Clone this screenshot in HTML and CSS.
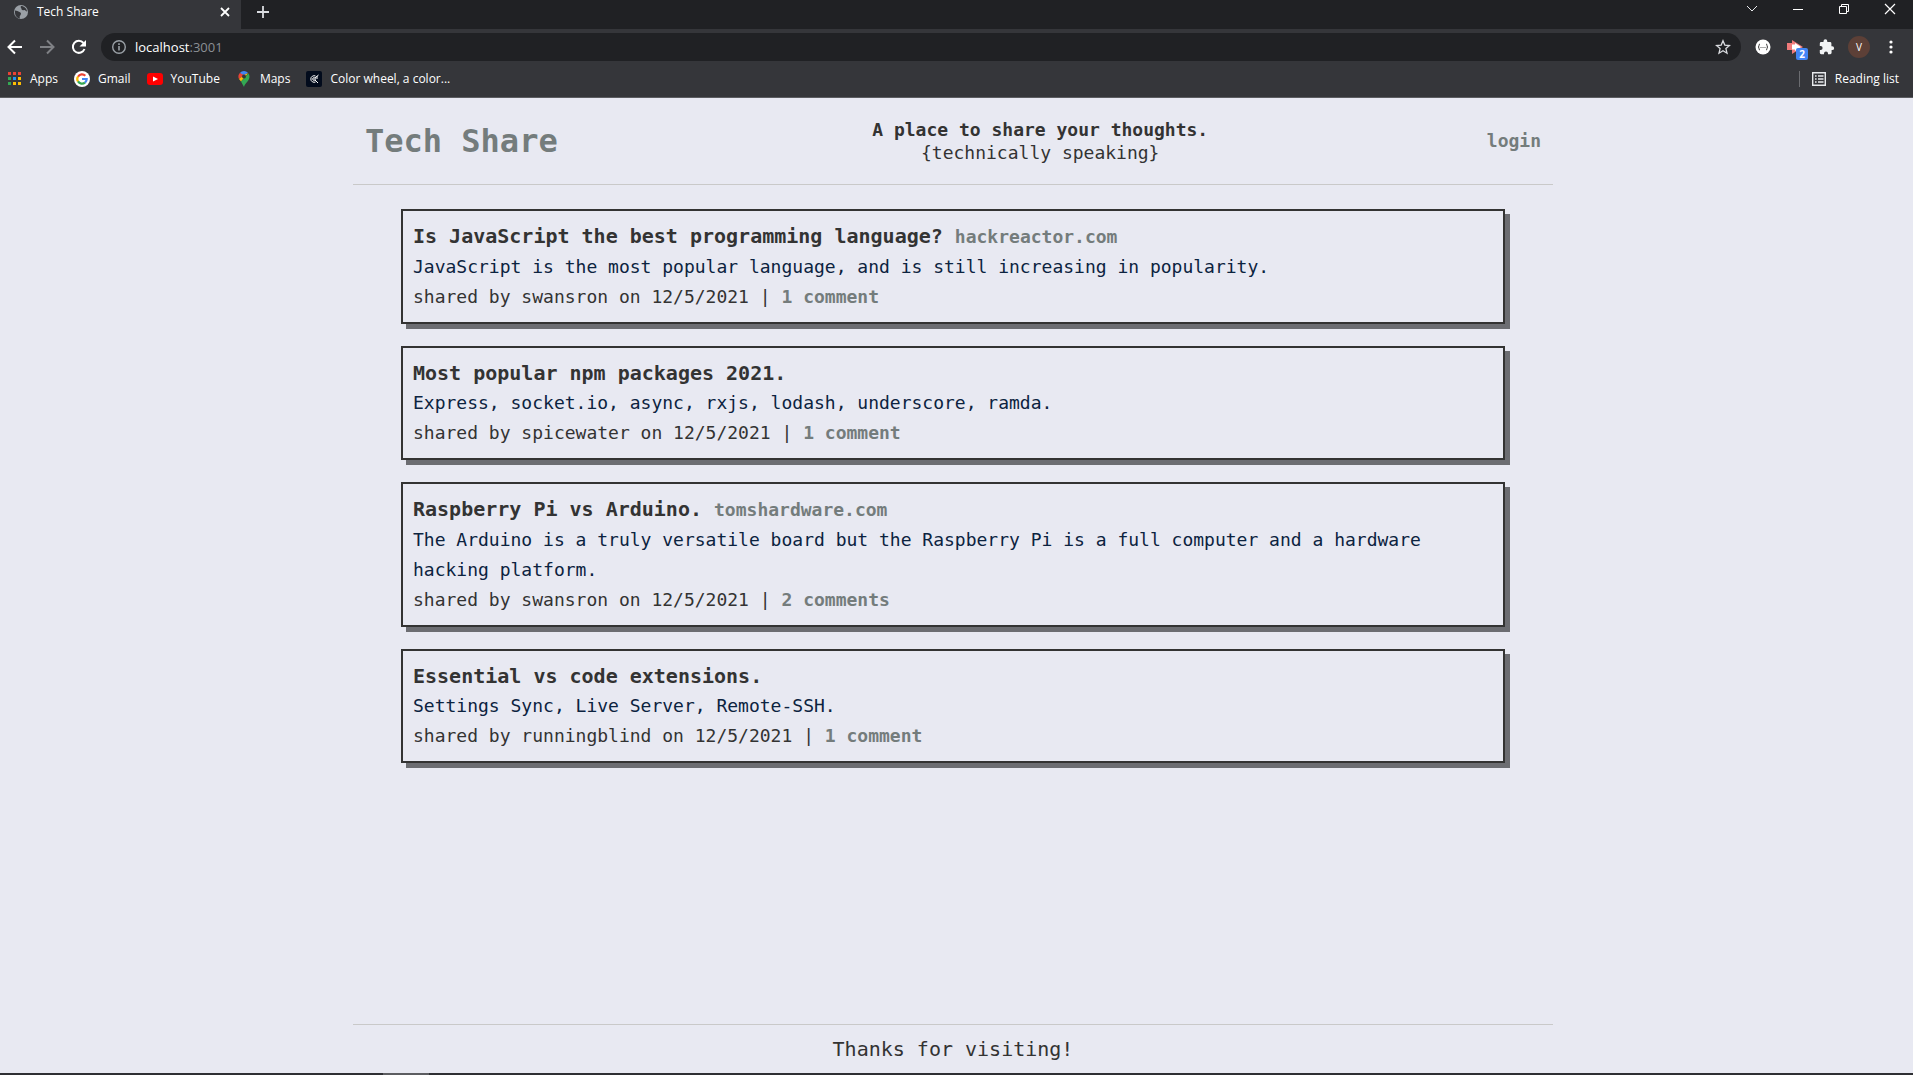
FILE: index.html
```html
<!DOCTYPE html>
<html lang="en">
<head>
<meta charset="utf-8">
<title>Tech Share</title>
<link rel="stylesheet" href="styles.css">
</head>
<body>
<div class="browser">
  <div class="tabstrip">
    <div class="tab">
      <svg width="16" height="16" viewBox="0 0 16 16"><circle cx="8" cy="8" r="7" fill="#9aa0a6"/><path d="M2 6.500c2 0 3 1 4.500 1.500s2 1.500 1 3-1 2-.5 3.500C3.500 14 1.500 11 2 6.500zM8 2c-1 1.500.5 2 .5 3s1 1.500 2.500 1 1.500 1.500 3 1.500C14 4.500 11 2 8 2z" fill="#35363a"/></svg>
      <span class="tab-title">Tech Share</span>
      <button class="icon-btn" aria-label="Close tab"><svg width="12" height="12" viewBox="0 0 12 12"><path d="M2 2l8 8M10 2l-8 8" stroke="#fff" stroke-width="1.800"/></svg></button>
    </div>
    <button class="icon-btn new-tab" aria-label="New tab"><svg width="14" height="14" viewBox="0 0 14 14"><path d="M7 1v12M1 7h12" stroke="#dadce0" stroke-width="1.800"/></svg></button>
    <div class="window-controls">
      <button class="icon-btn" aria-label="Search tabs"><svg width="12" height="12" viewBox="0 0 12 12"><path d="M1 3l5 5 5-5" fill="none" stroke="#e8eaed"/></svg></button>
      <button class="icon-btn" aria-label="Minimize"><svg width="12" height="12" viewBox="0 0 12 12"><path d="M1 6.500h10" stroke="#fff"/></svg></button>
      <button class="icon-btn" aria-label="Restore"><svg width="12" height="12" viewBox="0 0 12 12"><path d="M1.500 3.500h7v7h-7zM3.500 3.500v-2h7v7h-2" fill="none" stroke="#fff"/></svg></button>
      <button class="icon-btn" aria-label="Close"><svg width="12" height="12" viewBox="0 0 12 12"><path d="M1 1l10 10M11 1L1 11" stroke="#fff" stroke-width="1.200"/></svg></button>
    </div>
  </div>
  <div class="toolbar">
    <button class="icon-btn" aria-label="Back"><svg width="16" height="16" viewBox="0 0 16 16"><path d="M15 8H2M8 1.500L1.500 8 8 14.500" fill="none" stroke="#fff" stroke-width="2"/></svg></button>
    <button class="icon-btn" aria-label="Forward"><svg width="16" height="16" viewBox="0 0 16 16"><path d="M1 8h13M8 1.500L14.500 8 8 14.500" fill="none" stroke="#7f8185" stroke-width="2"/></svg></button>
    <button class="icon-btn" aria-label="Reload"><svg width="16" height="16" viewBox="0 0 16 16"><path d="M13.500 10A6 6 0 1 1 12.500 4" fill="none" stroke="#fff" stroke-width="2"/><path d="M15 1v6.500H8.500z" fill="#fff"/></svg></button>
    <div class="omnibox">
      <svg width="16" height="16" viewBox="0 0 16 16"><circle cx="8" cy="8" r="6.300" fill="none" stroke="#9aa0a6" stroke-width="1.400"/><path d="M8 7v4.500M8 4.200v1.700" stroke="#9aa0a6" stroke-width="1.600"/></svg>
      <span class="address">localhost<span class="port">:3001</span></span>
      <button class="icon-btn" aria-label="Bookmark this tab"><svg width="16" height="16" viewBox="0 0 16 16"><path d="M8 1.800l1.800 4.300 4.700.4-3.600 3.100 1.100 4.600L8 11.700l-4 2.500 1.100-4.600-3.600-3.100 4.700-.4z" fill="none" stroke="#dadce0" stroke-width="1.300"/></svg></button>
    </div>
    <div class="extensions">
      <button class="icon-btn" aria-label="JSON viewer"><svg width="16" height="16" viewBox="0 0 16 16"><circle cx="8" cy="8" r="7.500" fill="#fff"/><path d="M5 5Q4 5 4 6.500T3 8Q4 8 4 9.500T5 11M11 5q1 0 1 1.500T13 8q-1 0-1 1.500T11 11" fill="none" stroke="#333"/><path d="M5.500 8.500h1M7.500 8.500h1M9.500 8.500h1" stroke="#555"/></svg></button>
      <button class="icon-btn badged" aria-label="Video extension"><svg width="16" height="16" viewBox="0 0 16 16"><path d="M0 4h5V1l11 7-11 7v-4H0z" fill="#f07a7a"/><path d="M5 5.500h3V4l6 4-6 4v-1.500H5z" fill="#fff"/></svg><span class="badge">2</span></button>
      <button class="icon-btn" aria-label="Extensions"><svg width="16" height="16" viewBox="0 0 16 16"><path d="M13.200 7.300h-.8V4.400a1.400 1.400 0 0 0-1.400-1.400H8.300v-.8a1.900 1.900 0 0 0-3.800 0V3H2.200A1.400 1.400 0 0 0 .8 4.400V7h.8a2 2 0 0 1 0 4H.8v2.800a1.400 1.400 0 0 0 1.400 1.400H5v-.8a2 2 0 0 1 4 0v.8h2.200a1.400 1.400 0 0 0 1.400-1.400v-2.700h.6a1.900 1.900 0 0 0 0-3.800z" fill="#f1f3f4"/></svg></button>
      <button class="avatar" aria-label="Profile">V</button>
      <button class="icon-btn" aria-label="Menu"><svg width="16" height="16" viewBox="0 0 16 16" fill="#fff"><circle cx="8" cy="3" r="1.600"/><circle cx="8" cy="8" r="1.600"/><circle cx="8" cy="13" r="1.600"/></svg></button>
    </div>
  </div>
  <nav class="bookmarks" aria-label="Bookmarks">
    <a href="#"><svg width="14" height="14" viewBox="0 0 14 14"><path d="M0 0h3v3H0zM5 0h3v3H5zM10 0h3v3h-3z" fill="#ea4335"/><path d="M0 5h3v3H0z" fill="#34a853"/><path d="M5 5h3v3H5z" fill="#2196f3"/><path d="M10 5h3v3h-3z" fill="#fbbc04"/><path d="M0 10h3v3H0z" fill="#34a853"/><path d="M5 10h3v3H5zM10 10h3v3h-3z" fill="#fbbc04"/></svg>Apps</a>
    <a href="#"><svg width="16" height="16" viewBox="0 0 16 16"><circle cx="8" cy="8" r="8" fill="#fff"/><g fill="none" stroke-width="2.200"><path d="M4 5.700A4.700 4.700 0 0 1 11.300 4.700" stroke="#ea4335"/><path d="M4 5.500a4.700 4.700 0 0 0 0 5" stroke="#fbbc04"/><path d="M4 10.400a4.700 4.700 0 0 0 7 1.200" stroke="#34a853"/><path d="M8 8h4.700a4.700 4.700 0 0 1-1.700 3.600" stroke="#4285f4"/></g></svg>Gmail</a>
    <a href="#"><svg width="16" height="16" viewBox="0 0 16 16"><rect y="2" width="16" height="12" rx="3" fill="#f00"/><path d="M6 5.500v5L11 8z" fill="#fff"/></svg>YouTube</a>
    <a href="#"><svg width="16" height="16" viewBox="0 0 16 16"><path d="M8 0a5.500 5.500 0 0 0-4.200 2L8 5.500l3.800-4A5.500 5.500 0 0 0 8 0z" fill="#4285f4"/><path d="M3.800 2A5.500 5.500 0 0 0 3 8l5-4z" fill="#ea4335"/><path d="M3 8l2 2.500L12.500 2 8 4z" fill="#fbbc04"/><path d="M12.500 2.500L5 10.500 8 16c1-4 5.500-6 5.500-10.500a5.500 5.500 0 0 0-1-3z" fill="#34a853"/><circle cx="8" cy="5.500" r="2" fill="#35363a"/></svg>Maps</a>
    <a href="#"><svg width="16" height="16" viewBox="0 0 16 16"><rect width="16" height="16" rx="2" fill="#020b1c"/><g fill="none" stroke="#fff"><path d="M9.500 5A3.300 3.300 0 1 0 9.500 11"/><circle cx="8" cy="8" r="1.300"/><path d="M9 7l3.500-3M9 9l3 3M11 5v3"/></g></svg>Color wheel, a color...</a>
    <a href="#" class="reading-list"><svg width="16" height="16" viewBox="0 0 16 16"><path d="M1.700 1.700h12.600v12.600H1.700z" fill="none" stroke="#e8eaed" stroke-width="1.400"/><path d="M4 5h1.600M7 5h5.500M4 8h1.600M7 8h5.500M4 11h1.600M7 11h5.500" stroke="#e8eaed" stroke-width="1.500"/></svg>Reading list</a>
  </nav>
</div>
<div class="viewport">
  <div class="page">
    <header class="site-header">
      <h1><a href="#">Tech Share</a></h1>
      <p class="tagline"><strong>A place to share your thoughts.</strong><br>{technically speaking}</p>
      <a href="#" class="login">login</a>
    </header>
    <main class="posts">
      <article class="post">
        <h2>Is JavaScript the best programming language? <a href="#">hackreactor.com</a></h2>
        <p class="summary">JavaScript is the most popular language, and is still increasing in popularity.</p>
        <p>shared by swansron on 12/5/2021 | <a href="#">1 comment</a></p>
      </article>
      <article class="post">
        <h2>Most popular npm packages 2021.</h2>
        <p class="summary">Express, socket.io, async, rxjs, lodash, underscore, ramda.</p>
        <p>shared by spicewater on 12/5/2021 | <a href="#">1 comment</a></p>
      </article>
      <article class="post">
        <h2>Raspberry Pi vs Arduino. <a href="#">tomshardware.com</a></h2>
        <p class="summary">The Arduino is a truly versatile board but the Raspberry Pi is a full computer and a hardware hacking platform.</p>
        <p>shared by swansron on 12/5/2021 | <a href="#">2 comments</a></p>
      </article>
      <article class="post">
        <h2>Essential vs code extensions.</h2>
        <p class="summary">Settings Sync, Live Server, Remote-SSH.</p>
        <p>shared by runningblind on 12/5/2021 | <a href="#">1 comment</a></p>
      </article>
    </main>
    <footer class="site-footer">Thanks for visiting!</footer>
  </div>
</div>
<div class="taskbar"><span class="task"></span></div>
</body>
</html>
```
FILE: styles.css
```css
* { box-sizing: border-box; }

body {
  margin: 0;
  min-height: 100vh;
  display: flex;
  flex-direction: column;
  background: #e8e9f2;
  color: #333;
  font: 18px/30px "DejaVu Sans Mono", "Liberation Mono", monospace;
}

h1, h2, p { margin: 0; }
a { color: #747c7c; font-weight: bold; text-decoration: none; }
svg { display: block; flex: none; }

/* Browser frame */
.browser {
  background: #35363a;
  border-bottom: 1px solid #5c5d61;
  color: #fff;
  font: 12px/16px "Open Sans", "Noto Sans", sans-serif;
}
.icon-btn {
  display: flex;
  padding: 0;
  border: 0;
  background: none;
}
.tabstrip {
  display: flex;
  height: 29px;
  background: #202124;
}
.tab {
  display: flex;
  align-items: center;
  gap: 8px;
  width: 241px;
  padding: 0 10px 5px 13px;
  background: #35363a;
}
.tab-title { flex: 1; }
.new-tab { padding: 5px 0 0 15px; }
.window-controls {
  display: flex;
  gap: 34px;
  margin-left: auto;
  padding: 3px 17px 0 0;
}
.toolbar {
  display: flex;
  align-items: center;
  gap: 16px;
  height: 36px;
  padding: 0 14px 0 7px;
}
.omnibox {
  flex: 1;
  display: flex;
  align-items: center;
  gap: 8px;
  height: 28px;
  margin: 0 -2px;
  padding: 0 10px;
  border-radius: 14px;
  background: #202124;
}
.address { flex: 1; font-size: 13px; }
.port { color: #8b8f94; }
.extensions { display: flex; align-items: center; gap: 16px; }
.badged { position: relative; }
.badge {
  position: absolute;
  left: 9px;
  top: 9px;
  width: 12px;
  border-radius: 2px;
  background: #4285f4;
  color: #fff;
  font: bold 10px/12px "Open Sans", sans-serif;
  text-align: center;
}
.avatar {
  width: 22px;
  height: 22px;
  margin: 0 -3px;
  padding: 0;
  border: 0;
  border-radius: 50%;
  background: #5d4037;
  color: #fff;
  font: 10px/22px "Open Sans", sans-serif;
}
.bookmarks {
  display: flex;
  align-items: center;
  gap: 16px;
  height: 32px;
  padding: 0 14px 4px 8px;
}
.bookmarks a {
  display: flex;
  align-items: center;
  gap: 8px;
  color: #fff;
  font-weight: normal;
}
.bookmarks .reading-list {
  margin-left: auto;
  padding-left: 11px;
  border-left: 1px solid #6b6c70;
}

/* Site */
.viewport {
  flex: 1;
  display: flex;
  justify-content: center;
  padding-right: 7px;
}
.page {
  flex: 1;
  display: flex;
  flex-direction: column;
  max-width: 1200px;
}
.site-header {
  display: flex;
  align-items: center;
  justify-content: space-between;
  padding: 20px 12px;
  border-bottom: 1px solid #c9c9c9;
}
.site-header h1 { margin-right: 36px; font-size: 32px; line-height: 46px; }
.tagline { line-height: 23px; text-align: center; }
.posts {
  flex: 1;
  display: flex;
  flex-direction: column;
  gap: 22px;
  padding: 24px 48px;
}
.post {
  padding: 10px;
  border: 2px solid #333;
  box-shadow: 5px 5px #6c6d72;
}
.post h2 { font-size: 20px; }
.post h2 a { font-size: 18px; }
.summary { color: #0c2340; }
.site-footer {
  padding: 9px 0;
  border-top: 1px solid #c9c9c9;
  font-size: 20px;
  text-align: center;
}
.taskbar { height: 2px; padding-left: 20%; background: #2e2f33; }
.task { display: block; width: 46px; height: 2px; background: #5c5d61; }
```
